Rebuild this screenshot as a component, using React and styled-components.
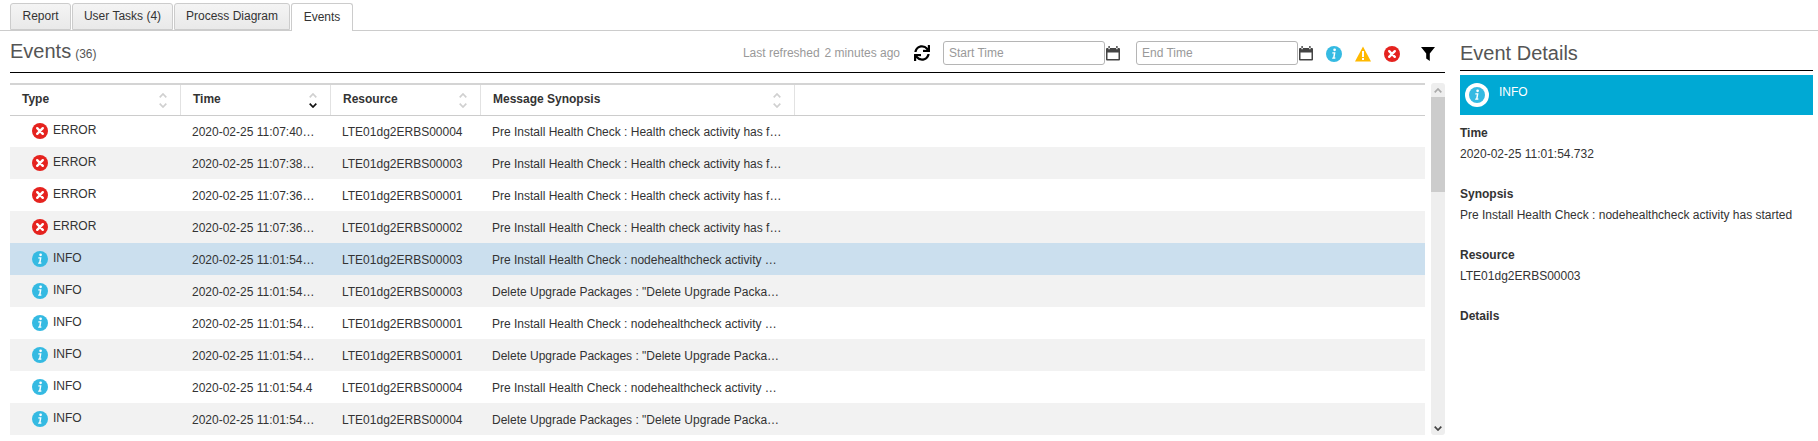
import React from 'react';
import styled, { createGlobalStyle } from 'styled-components';
import { FaSync } from 'react-icons/fa';

const Global = createGlobalStyle`
  html, body { margin: 0; padding: 0; background: #fff; overflow: hidden; }
  body { font: 12px/16px "Liberation Sans", Arial, sans-serif; color: #333; }
`;

const Page = styled.div`
  width: 1818px; height: 441px; overflow: hidden; background: #fff; box-sizing: border-box; padding-top: 3px;
`;
const Tabs = styled.div`
  display: flex; height: 28px; box-sizing: border-box; padding-left: 10px; gap: 1px;
  border-bottom: 1px solid #ccc;
`;
const Tab = styled.div`
  width: ${p => p.$w}px; height: ${p => p.$active ? 28 : 27}px; box-sizing: border-box;
  display: flex; align-items: center; justify-content: center; padding-bottom: 1px;
  border: 1px solid #ccc; border-bottom: ${p => p.$active ? 'none' : '1px solid #ccc'};
  border-radius: 3px 3px 0 0; background: ${p => p.$active ? '#fff' : 'linear-gradient(#f4f4f4,#e9e9e9)'};
  color: #333; font-size: 12px;
`;
const Columns = styled.div`display: flex; padding-left: 10px;`;
const Main = styled.div`width: 1435px;`;
const Toolbar = styled.div`
  height: 39px; padding-top: 2px; border-bottom: 1px solid #000; display: flex; align-items: center;
`;
const Title = styled.h2`font-size: 20px; line-height: 24px; font-weight: 400; color: #555; margin: 0 0 ${p => p.$mb ?? 0}px;`;
const Count = styled.span`font-size: 12px; color: #555; margin: 2px 0 0 4px;`;
const Refreshed = styled.span`color: #999; font-size: 12px; margin-left: auto; margin-right: 14px; display: flex; gap: 5px;`;
const Refresh = styled.span`display: flex; margin-right: 13px; color: #000;`;
const DateInput = styled.input`
  width: 162px; height: 24px; box-sizing: border-box; border: 1px solid #b5b5b5; border-radius: 3px; padding: 0 5px;
  font: 12px "Liberation Sans", Arial, sans-serif; background: #fff; outline: none;
  &::placeholder { color: #999; opacity: 1; }
`;
const Cal = styled.span`display: flex; margin: 1px ${p => p.$gap}px 0 1px;`;
const Status = styled.span`display: flex; margin: 2px ${p => p.$gap}px 0 0;`;
const TableArea = styled.div`display: flex; margin-top: 10px; height: 352px; overflow: hidden; gap: 6px;`;
const Table = styled.div`width: 1415px; height: 352px; overflow: hidden;`;
const Head = styled.div`
  display: grid; grid-template-columns: 171px 150px 150px 314px 1fr; height: 33px; box-sizing: border-box;
  border-top: 2px solid #d4d4d4; border-bottom: 1px solid #ccc; margin-bottom: -1px; position: relative; z-index: 1;
`;
const HeadCell = styled.div`
  display: flex; align-items: center; justify-content: space-between; box-sizing: border-box;
  padding: 0 13px 2px 12px; font-weight: 700; color: #333; border-right: 1px solid #e2e2e2;
  &:last-child { border-right: none; }
`;
const Row = styled.div`
  display: grid; grid-template-columns: 171px 150px 150px 314px 1fr; height: 32px; align-items: center;
  background: ${p => p.$sel ? '#cbdfee' : p.$odd ? '#f2f2f2' : '#fff'};
`;
const TypeCell = styled.div`display: flex; align-items: center; gap: 5px; padding-left: 22px;`;
const TypeLabel = styled.span`margin-top: -3px; color: #333;`;
const Cell = styled.div`
  padding: 0 ${p => p.$pr}px 0 11px; white-space: nowrap; overflow: hidden; text-overflow: ellipsis; color: #333; margin-top: 1px;
`;
const Track = styled.div`
  width: 14px; height: 352px; background: #eee; border-radius: 3px; display: flex; flex-direction: column; align-items: center;
`;
const Arrow = styled.div`height: 14px; display: flex; align-items: center; justify-content: center; flex: none;`;
const Thumb = styled.div`width: 14px; height: 95px; background: #ccc; flex: none;`;
const Spacer = styled.div`flex: 1;`;
const Details = styled.div`width: 353px; margin-left: 15px;`;
const DetailHead = styled.div`
  height: 34px; padding-top: 5px; border-bottom: 1px solid #000; display: flex; align-items: center;
`;
const Banner = styled.div`
  margin-top: 4px; height: 40px; background: #00a9d4; display: flex; align-items: center; padding-left: 5px; gap: 10px; color: #fff;
`;
const BannerLabel = styled.span`margin-top: -6px;`;
const Section = styled.div`height: 61px;`;
const Sections = styled.div`padding-top: 10px;`;
const Label = styled.div`font-weight: 700; line-height: 16px; color: #333;`;
const Value = styled.div`margin-top: 5px; line-height: 16px; color: #333;`;

const InfoIcon = ({ size = 16, bg = '#35bae2' }) => (
  <svg width={size} height={size} viewBox="0 0 16 16">
    <circle cx="8" cy="8" r="8" fill={bg} />
    <circle cx="8.6" cy="3.8" r="1.35" fill="#fff" />
    <path d="M6.4 6.3h3.1l-.9 5.2.9.1-.2 1.1H6.1l.2-1.1h.8l.7-4.2h-1.6z" fill="#fff" />
  </svg>
);
const ErrorIcon = () => (
  <svg width="16" height="16" viewBox="0 0 16 16">
    <circle cx="8" cy="8" r="8" fill="#e5231f" />
    <path d="M5.2 5.2l5.6 5.6M10.8 5.2l-5.6 5.6" stroke="#fff" strokeWidth="2.4" strokeLinecap="round" />
  </svg>
);
const WarnIcon = () => (
  <svg width="16" height="16" viewBox="0 0 16 16">
    <path d="M8 .5L16 15.5H0z" fill="#ffb900" />
    <rect x="7" y="5" width="2" height="6" fill="#fff" />
    <rect x="7" y="12" width="2" height="2" fill="#fff" />
  </svg>
);
const CalIcon = () => (
  <svg width="14" height="15" viewBox="0 0 14 15">
    <path d="M1 2h12a1 1 0 0 1 1 1v10.5a1 1 0 0 1-1 1H1a1 1 0 0 1-1-1V3a1 1 0 0 1 1-1zm.5 4.5v6.5h11V6.5z" fill="#444" fillRule="evenodd" />
    <rect x="2.4" y="0" width="1.4" height="2.8" fill="#444" />
    <rect x="10.2" y="0" width="1.4" height="2.8" fill="#444" />
    <rect x="2.4" y="2" width="1.4" height="1.2" fill="#fff" />
    <rect x="10.2" y="2" width="1.4" height="1.2" fill="#fff" />
  </svg>
);
const FilterIcon = () => (
  <svg width="14" height="14" viewBox="0 0 14 14">
    <path d="M0 0h14L8.8 6.4V14L5.2 11.6V6.4z" fill="#000" />
  </svg>
);
const Chevron = ({ up, color = '#d0d0d0', w = 8 }) => (
  <svg width={w} height="5" viewBox="0 0 8 5">
    <path d={up ? 'M.7 4.3L4 1l3.3 3.3' : 'M.7.7L4 4l3.3-3.3'} fill="none" stroke={color} strokeWidth="1.7" />
  </svg>
);
const SortBox = styled.span`display: flex; flex-direction: column; align-items: center; gap: 5px; margin-top: 2px;`;
const Sort = ({ active }) => (
  <SortBox>
    <Chevron up />
    <Chevron color={active ? '#111' : '#d0d0d0'} />
  </SortBox>
);

const hc = 'Pre Install Health Check : Health check activity has failed';
const nh = 'Pre Install Health Check : nodehealthcheck activity has started';
const du = 'Delete Upgrade Packages : "Delete Upgrade Packages" activity has started';
const rows = [
  ['ERROR', '2020-02-25 11:07:40.812', 'LTE01dg2ERBS00004', hc],
  ['ERROR', '2020-02-25 11:07:38.604', 'LTE01dg2ERBS00003', hc],
  ['ERROR', '2020-02-25 11:07:36.711', 'LTE01dg2ERBS00001', hc],
  ['ERROR', '2020-02-25 11:07:36.215', 'LTE01dg2ERBS00002', hc],
  ['INFO', '2020-02-25 11:01:54.732', 'LTE01dg2ERBS00003', nh, true],
  ['INFO', '2020-02-25 11:01:54.731', 'LTE01dg2ERBS00003', du],
  ['INFO', '2020-02-25 11:01:54.522', 'LTE01dg2ERBS00001', nh],
  ['INFO', '2020-02-25 11:01:54.521', 'LTE01dg2ERBS00001', du],
  ['INFO', '2020-02-25 11:01:54.4', 'LTE01dg2ERBS00004', nh],
  ['INFO', '2020-02-25 11:01:54.398', 'LTE01dg2ERBS00004', du],
];
const details = [
  ['Time', '2020-02-25 11:01:54.732'],
  ['Synopsis', 'Pre Install Health Check : nodehealthcheck activity has started'],
  ['Resource', 'LTE01dg2ERBS00003'],
  ['Details', ''],
];

export default function App() {
  return (
    <Page>
      <Global />
      <Tabs>
        <Tab $w={61}>Report</Tab>
        <Tab $w={101}>User Tasks (4)</Tab>
        <Tab $w={116}>Process Diagram</Tab>
        <Tab $w={62} $active>Events</Tab>
      </Tabs>
      <Columns>
        <Main>
          <Toolbar>
            <Title $mb={4}>Events</Title>
            <Count>(36)</Count>
            <Refreshed><span>Last refreshed</span><span>2 minutes ago</span></Refreshed>
            <Refresh><FaSync size={16} /></Refresh>
            <DateInput placeholder="Start Time" />
            <Cal $gap={16}><CalIcon /></Cal>
            <DateInput placeholder="End Time" />
            <Cal $gap={13}><CalIcon /></Cal>
            <Status $gap={13}><InfoIcon /></Status>
            <Status $gap={13}><WarnIcon /></Status>
            <Status $gap={21}><ErrorIcon /></Status>
            <Status $gap={10}><FilterIcon /></Status>
          </Toolbar>
          <TableArea>
            <Table>
              <Head>
                <HeadCell>Type<Sort /></HeadCell>
                <HeadCell>Time<Sort active /></HeadCell>
                <HeadCell>Resource<Sort /></HeadCell>
                <HeadCell>Message Synopsis<Sort /></HeadCell>
                <HeadCell />
              </Head>
              {rows.map((r, i) => (
                <Row key={i} $odd={i % 2 === 1} $sel={r[4]}>
                  <TypeCell>
                    {r[0] === 'ERROR' ? <ErrorIcon /> : <InfoIcon />}
                    <TypeLabel>{r[0]}</TypeLabel>
                  </TypeCell>
                  <Cell $pr={14}>{r[1]}</Cell>
                  <Cell $pr={14}>{r[2]}</Cell>
                  <Cell $pr={12}>{r[3]}</Cell>
                  <div />
                </Row>
              ))}
            </Table>
            <Track>
              <Arrow><Chevron up color="#aaa" /></Arrow>
              <Thumb />
              <Spacer />
              <Arrow><Chevron color="#444" /></Arrow>
            </Track>
          </TableArea>
        </Main>
        <Details>
          <DetailHead><Title>Event Details</Title></DetailHead>
          <Banner>
            <svg width="24" height="24" viewBox="0 0 24 24">
              <circle cx="12" cy="12" r="12" fill="#fff" />
              <g transform="translate(4 4)">
                <circle cx="8" cy="8" r="8" fill="#35bae2" />
                <circle cx="8.6" cy="3.8" r="1.35" fill="#fff" />
                <path d="M6.4 6.3h3.1l-.9 5.2.9.1-.2 1.1H6.1l.2-1.1h.8l.7-4.2h-1.6z" fill="#fff" />
              </g>
            </svg>
            <BannerLabel>INFO</BannerLabel>
          </Banner>
          <Sections>
            {details.map(([l, v]) => (
              <Section key={l}>
                <Label>{l}</Label>
                {v && <Value>{v}</Value>}
              </Section>
            ))}
          </Sections>
        </Details>
      </Columns>
    </Page>
  );
}
